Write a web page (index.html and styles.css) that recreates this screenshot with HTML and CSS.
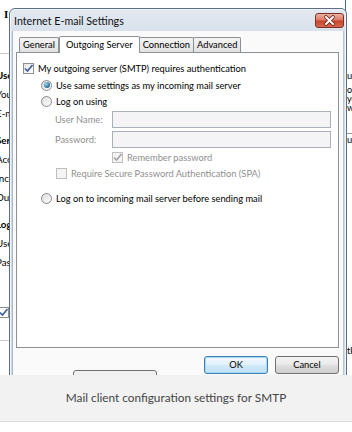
FILE: index.html
```html
<!DOCTYPE html>
<html lang="en">
<head>
    <meta charset="UTF-8">
    <meta name="viewport" content="width=device-width, initial-scale=1.0">
    <title>Internet E-mail Settings</title>
    <link rel="stylesheet" href="styles.css">
</head>
<body>
    <figure class="figure">
        <div class="shot">
            <div class="back-left">
                <span class="back-top">I</span>
                <span class="back-rule"></span>
                <span class="back-head">User Information</span>
                <span class="back-field">Your Name:</span>
                <span class="back-field">E-mail Address:</span>
                <span class="back-head">Server Information</span>
                <span class="back-field">Account Type:</span>
                <span class="back-field">Incoming mail server:</span>
                <span class="back-field">Outgoing mail server (SMTP):</span>
                <span class="back-head">Logon Information</span>
                <span class="back-field">User Name:</span>
                <span class="back-field">Password:</span>
                <span class="back-check">
                    <svg width="11" height="11" viewBox="0 0 11 11"><path d="M2 5.5 L4.5 8 L9.5 2" fill="none" stroke="#3d5f9c" stroke-width="1.6"/></svg>
                </span>
                <span class="back-rule low"></span>
            </div>

            <div class="back-right">
                <span class="back-r1">urrent</span>
                <p class="back-para">ou<br>you<br>w.</p>
                <span class="back-rule r"></span>
                <span class="back-r2">ur</span>
                <span class="back-r3">tk</span>
            </div>

            <div class="dialog">
                <div class="titlebar">
                    <span class="title">Internet E-mail Settings</span>
                    <span class="close">
                        <svg width="29" height="15" viewBox="0 0 29 15">
                            <path d="M11 4 L18 11 M18 4 L11 11" stroke="#6a2418" stroke-width="3.6" stroke-linecap="round"/>
                            <path d="M11 4 L18 11 M18 4 L11 11" stroke="#ffffff" stroke-width="2" stroke-linecap="round"/>
                        </svg>
                    </span>
                </div>

                <div class="client">
                    <div class="tabs">
                        <span class="tab">General</span>
                        <span class="tab active">Outgoing Server</span>
                        <span class="tab">Connection</span>
                        <span class="tab">Advanced</span>
                    </div>

                    <div class="panel">
                        <label class="row r-auth">
                            <span class="chk">
                                <svg width="11" height="11" viewBox="0 0 11 11"><path d="M2 5.5 L4.5 8 L9.5 2" fill="none" stroke="#3d5f9c" stroke-width="1.6"/></svg>
                            </span>
                            My outgoing server (SMTP) requires authentication
                        </label>
                        <label class="row r-same">
                            <span class="radio on"></span>
                            Use same settings as my incoming mail server
                        </label>
                        <label class="row r-logon">
                            <span class="radio"></span>
                            Log on using
                        </label>
                        <div class="field f-user">
                            <span class="field-label">User Name:</span>
                            <span class="input"></span>
                        </div>
                        <div class="field f-pass">
                            <span class="field-label">Password:</span>
                            <span class="input"></span>
                        </div>
                        <label class="row dim r-remember">
                            <span class="chk">
                                <svg width="11" height="11" viewBox="0 0 11 11"><path d="M2 5.5 L4.5 8 L9.5 2" fill="none" stroke="#a3a3a3" stroke-width="1.6"/></svg>
                            </span>
                            Remember password
                        </label>
                        <label class="row dim r-spa">
                            <span class="chk"></span>
                            Require Secure Password Authentication (SPA)
                        </label>
                        <label class="row r-before">
                            <span class="radio"></span>
                            Log on to incoming mail server before sending mail
                        </label>
                    </div>

                    <div class="actions">
                        <span class="btn btn-search">Search Change</span>
                        <span class="btn btn-ok">OK</span>
                        <span class="btn">Cancel</span>
                    </div>
                </div>
            </div>
        </div>
        <figcaption class="caption">Mail client configuration settings for SMTP</figcaption>
    </figure>
</body>
</html>
```

FILE: styles.css
```css
body {
    margin: 0;
    background: #ffffff;
    font-family: Lato, "Liberation Sans", sans-serif;
}
.figure {
    margin: 0;
    width: 352px;
}
.shot {
    position: relative;
    display: flex;
    height: 375px;
    overflow: hidden;
    background: #ffffff;
    font-size: 9.3px;
    color: #000000;
}

/* window behind the dialog */
.back-left {
    display: flex;
    flex-direction: column;
    width: 9px;
    overflow: hidden;
    white-space: nowrap;
    line-height: 12px;
    font-size: 9.8px;
}
.back-top {
    margin-top: 8px;
    margin-left: 4px;
    font-family: "Liberation Serif", serif;
    font-weight: bold;
    font-size: 11px;
}
.back-rule {
    display: block;
    height: 1px;
    margin-top: 33px;
    background: #c9c9c9;
}
.back-rule.low {
    margin-top: 22px;
}
.back-head {
    margin-top: 15px;
    margin-left: -4px;
    font-weight: bold;
}
.back-field {
    margin-top: 7px;
    margin-left: -4px;
}
.back-check {
    display: block;
    width: 11px;
    height: 11px;
    margin-top: 39px;
    margin-left: -2px;
    box-sizing: border-box;
    border: 1px solid #8e8f8f;
    background: #fdfdfd;
}
.back-check svg {
    display: block;
    margin: -1px;
}
.back-right {
    display: flex;
    flex-direction: column;
    width: 5px;
    margin-left: auto;
    padding-left: 1px;
    overflow: hidden;
    white-space: nowrap;
    line-height: 12px;
    border-left: 1px solid #3b6fa0;
}
.back-r1 {
    margin-top: 70px;
}
.back-para {
    margin: 3px 0 0;
    font-size: 9px;
    line-height: 9px;
}
.back-rule.r {
    margin-top: 21px;
    margin-left: -1px;
    background: #9a9a9a;
}
.back-r3 {
    margin-top: 199px;
}

/* dialog */
.dialog {
    position: absolute;
    left: 9px;
    top: 8px;
    width: 338px;
    height: 380px;
    box-sizing: border-box;
    border: 1px solid #5e6f83;
    border-radius: 6px 6px 0 0;
    background: linear-gradient(#e3e9f1, #d5dfea 30px, #cfdae6);
    box-shadow: inset 0 0 0 1px #f1f5f9;
}
.titlebar {
    display: flex;
    align-items: center;
    height: 22px;
    padding: 0 2px 0 4px;
}
.title {
    font-size: 10.7px;
    color: #111111;
}
.close {
    display: block;
    width: 29px;
    height: 15px;
    margin-left: auto;
    box-sizing: border-box;
    border: 1px solid #7d3024;
    border-radius: 3px;
    background: linear-gradient(#ebb3a6, #dd7a66 45%, #c9432d 55%, #d56a50);
}
.close svg {
    display: block;
    margin: -1px;
}
.client {
    height: 356px;
    margin: 0 2px;
    padding: 5px 4px 0 3px;
    background: #fafafa;
    border-left: 1px solid #a9b7c7;
    border-right: 1px solid #b4c6da;
}

.tabs {
    position: relative;
    z-index: 1;
    display: flex;
    align-items: flex-end;
    padding-left: 3px;
    margin-bottom: -1px;
}
.tab {
    height: 14px;
    margin-bottom: 1px;
    margin-right: -1px;
    padding: 0 3px;
    border: 1px solid #8c9097;
    border-bottom: none;
    border-radius: 2px 2px 0 0;
    background: linear-gradient(#f5f5f5, #e1e1e1);
    line-height: 14px;
}
.tab.active {
    position: relative;
    height: 16px;
    margin: 0 -1px 0 1px;
    padding: 0 6px;
    background: #ffffff;
    line-height: 15px;
}

.panel {
    display: flex;
    flex-direction: column;
    height: 296px;
    box-sizing: border-box;
    padding: 7px 7px 0 6px;
    border: 1px solid #8c9097;
    background: #ffffff;
}
.row {
    display: flex;
    align-items: center;
    gap: 4px;
    height: 16px;
    white-space: nowrap;
}
.dim {
    color: #8f8f8f;
}
.r-same {
    margin: 1px 0 0 18px;
}
.r-logon {
    margin-left: 18px;
}
.r-remember {
    margin: 1px 0 0 89px;
}
.r-spa {
    margin-left: 33px;
}
.r-before {
    margin: 9px 0 0 18px;
}
.chk {
    display: block;
    width: 11px;
    height: 11px;
    box-sizing: border-box;
    border: 1px solid #8e8f8f;
    background: linear-gradient(135deg, #e4e4e4, #ffffff);
}
.chk svg {
    display: block;
    margin: -1px;
}
.dim .chk {
    border-color: #c0c0c0;
    background: #f4f4f4;
}
.radio {
    display: flex;
    align-items: center;
    justify-content: center;
    width: 11px;
    height: 11px;
    box-sizing: border-box;
    border: 1px solid #8a8a8a;
    border-radius: 50%;
    background: linear-gradient(135deg, #dcdcdc, #ffffff);
}
.radio.on::after {
    content: "";
    width: 6px;
    height: 6px;
    border-radius: 50%;
    background: radial-gradient(circle at 35% 35%, #9fd9ef, #2a6f98 65%, #1d4c70);
}
.field {
    display: flex;
    align-items: center;
    height: 17px;
    margin: 2px 0 0 32px;
    color: #8f8f8f;
}
.f-pass {
    margin-top: 3px;
}
.field-label {
    width: 57px;
}
.input {
    flex: 1;
    height: 17px;
    box-sizing: border-box;
    border: 1px solid #abb1bb;
    background: #f4f4f6;
}

.actions {
    display: flex;
    align-items: flex-start;
    margin-top: 8px;
    padding-left: 57px;
}
.btn {
    flex: none;
    width: 64px;
    height: 18px;
    box-sizing: border-box;
    border: 1px solid #707070;
    border-radius: 3px;
    background: linear-gradient(#f3f3f3, #ebebeb 45%, #dddddd 55%, #cfcfcf);
    text-align: center;
    line-height: 16px;
}
.btn + .btn {
    margin-left: 7px;
}
.btn-ok {
    border-color: #3c7fb1;
    box-shadow: inset 0 0 0 1px #a7d8f5;
    background: linear-gradient(#f2f9fe, #e4f2fc 45%, #cfe8f8 55%, #c3e1f5);
}
.actions .btn-ok {
    margin-left: auto;
}
.btn-search {
    width: 84px;
    margin-top: 14px;
    white-space: nowrap;
    overflow: hidden;
}

/* caption under the picture */
.caption {
    display: flex;
    align-items: center;
    justify-content: center;
    height: 44px;
    padding-bottom: 2px;
    background: #f2f2f2;
    border-bottom: 1px solid #dadada;
    font-size: 11.8px;
    color: #444444;
}
```
